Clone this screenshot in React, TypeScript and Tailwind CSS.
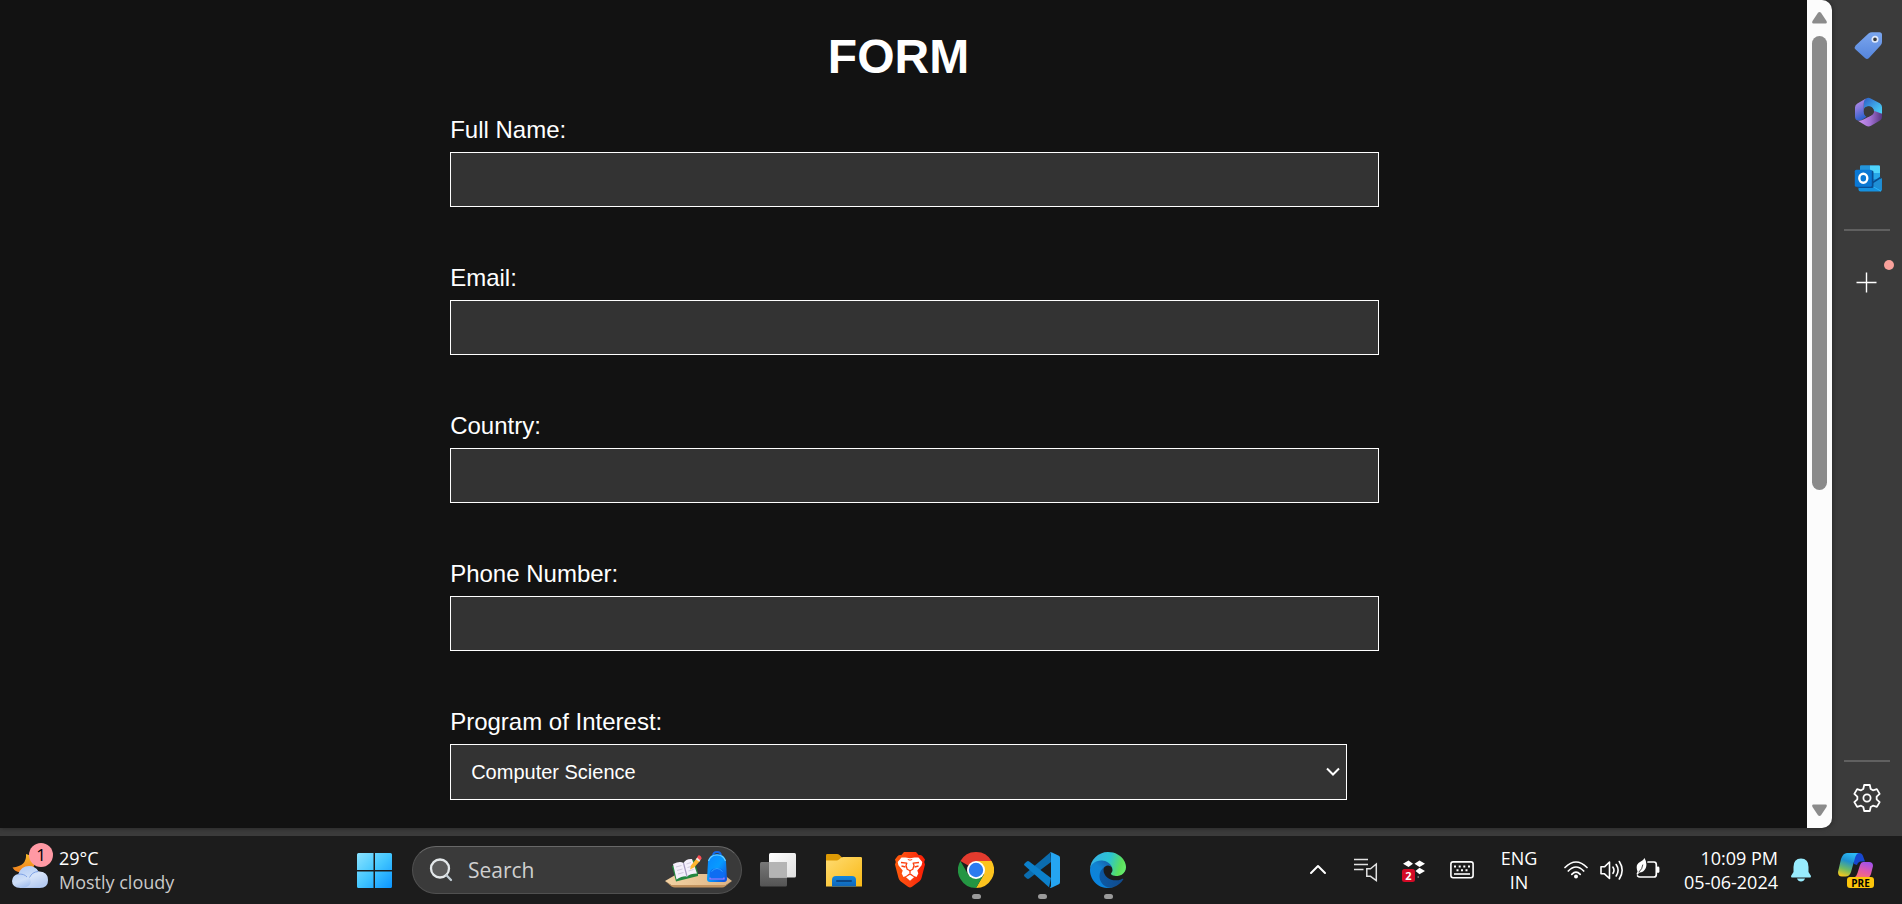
import type { ReactNode } from "react";

const textFields = [
  { id: "full-name", label: "Full Name:", type: "text" },
  { id: "email", label: "Email:", type: "email" },
  { id: "country", label: "Country:", type: "text" },
  { id: "phone", label: "Phone Number:", type: "tel" },
];

/* ---------- Sidebar icons ---------- */

function TagIcon() {
  return (
    <svg width="32" height="32" viewBox="0 0 32 32" className="ml-1" aria-hidden="true">
      <defs>
        <linearGradient id="tag" x1="0" y1="0" x2="0" y2="1">
          <stop offset="0" stopColor="#7ba6ee" />
          <stop offset="1" stopColor="#5585dc" />
        </linearGradient>
      </defs>
      <path d="M15.500 3.600 Q17 2.200 19 2.200 H26.500 Q29 2.200 29 4.700 V12 Q29 14 27.700 15.300 L16 28 Q14 29.800 12 28 L2.600 19.500 Q.8 17.500 2.600 15.500 Z" fill="url(#tag)" />
      <circle cx="22" cy="9.300" r="2.700" fill="#3b3b3b" stroke="#dfe9fb" strokeWidth="1.700" />
    </svg>
  );
}

function MicrosoftIcon() {
  return (
    <svg width="32" height="32" viewBox="0 0 32 32" className="ml-1" aria-hidden="true">
      <defs>
        <linearGradient id="m-left" x1="0" y1="0" x2=".3" y2="1">
          <stop offset="0" stopColor="#c492ec" />
          <stop offset=".5" stopColor="#8378dc" />
          <stop offset="1" stopColor="#2f62cf" />
        </linearGradient>
        <linearGradient id="m-right" x1="0" y1="0" x2="1" y2="1">
          <stop offset="0" stopColor="#2c5cc4" />
          <stop offset=".55" stopColor="#3fa8e8" />
          <stop offset="1" stopColor="#4fdcfa" />
        </linearGradient>
        <linearGradient id="m-base" x1="0" y1="0" x2="1" y2="0">
          <stop offset="0" stopColor="#cf95f4" />
          <stop offset=".5" stopColor="#a573d6" />
          <stop offset="1" stopColor="#573680" />
        </linearGradient>
      </defs>
      <path d="M11 4.500 L13 2.600 Q15 1.200 17.200 2.200 L26.800 7.200 Q29 8.600 29 11 V19 L20.800 15.500 Q20.500 11 16 10.600 Q12.500 10.600 11 14 Z" fill="url(#m-right)" />
      <path d="M13 2.600 L4.400 7.400 Q2 8.800 2 11.400 V20.500 Q2 24.600 5.500 24.600 Q8 24.600 9.500 23.500 L13.500 20.800 Q10.600 19 10.800 15.500 V7.600 Q10.800 4.400 13 2.600 Z" fill="url(#m-left)" />
      <path d="M29 17.500 V21 Q29 23.200 27 24.500 L18 29.800 Q15.500 31 13 29.800 L4.500 24.500 Q8 25.200 11 23.200 L18 19.400 Q21 18 20.800 14.800 L27 17 Q28.600 17.600 29 17.500 Z" fill="url(#m-base)" />
      <path d="M11 13 Q12 10.300 16 10.300 Q20.800 11 20.900 15.500 Q20.900 18 18 19.500 L15 21 Q11 19.500 10.900 15.500 Z" fill="#3b3b3b" />
    </svg>
  );
}

function OutlookIcon() {
  return (
    <svg width="32" height="32" viewBox="0 0 32 32" className="ml-1" aria-hidden="true">
      <rect x="7" y="3.500" width="20" height="18" rx="1.200" fill="#1a8ad8" />
      <path d="M17 3.500 H26 Q27 3.500 27 4.500 V11 H17 Z" fill="#50d4fb" />
      <path d="M8 3.500 H17 V11 H7 V4.500 Q7 3.500 8 3.500 Z" fill="#2496dc" />
      <path d="M17 11 H27 V17 H17 Z" fill="#28a8ea" />
      <path d="M5.500 20 L28.800 16.500 V27.500 Q28.800 29.500 27 29.500 H7.500 Q5.500 29.500 5.500 27.500 Z" fill="#1591e0" />
      <path d="M18 22.500 L28.800 16.200 V28.500 Z" fill="#1f8fd6" />
      <path d="M16 22.300 L28 29.200" stroke="#2cb4f4" strokeWidth="1" />
      <path d="M17 22.300 L27.500 15.500" stroke="#0b4c8c" strokeWidth="1.500" />
      <rect x="4" y="8.500" width="16.500" height="17.500" rx="1.500" fill="#0a4f94" />
      <rect x="1.800" y="7.800" width="17" height="17" rx="1.500" fill="#0a78d4" />
      <ellipse cx="10.300" cy="16.200" rx="4" ry="4.500" fill="none" stroke="#fff" strokeWidth="2.400" />
    </svg>
  );
}

function gearOutline() {
  const tooth = [
    [-3.7, -9],
    [-2.8, -13],
    [2.8, -13],
    [3.7, -9],
  ];
  const points: string[] = [];
  for (let i = 0; i < 6; i += 1) {
    const angle = (i * Math.PI) / 3;
    for (const [x, y] of tooth) {
      const px = 16 + x * Math.cos(angle) - y * Math.sin(angle);
      const py = 16 + x * Math.sin(angle) + y * Math.cos(angle);
      points.push(`${px.toFixed(2)},${py.toFixed(2)}`);
    }
  }
  return points.join(" ");
}

function GearIcon() {
  return (
    <svg width="32" height="32" viewBox="0 0 32 32" fill="none" stroke="#fff" strokeWidth="1.800" strokeLinejoin="round" aria-hidden="true">
      <polygon points={gearOutline()} />
      <circle cx="16" cy="16" r="3.600" />
    </svg>
  );
}

/* ---------- Taskbar icons ---------- */

function WeatherIcon() {
  return (
    <svg width="44" height="48" viewBox="0 0 44 48" aria-hidden="true">
      <defs>
        <linearGradient id="moon" x1="0" y1="0" x2="0" y2="1">
          <stop offset="0" stopColor="#f7b928" />
          <stop offset="1" stopColor="#f07c1c" />
        </linearGradient>
        <linearGradient id="cloud" x1="0" y1="0" x2=".6" y2="1">
          <stop offset="0" stopColor="#a9c6f5" />
          <stop offset=".6" stopColor="#cfdff8" />
          <stop offset="1" stopColor="#8fb0ea" />
        </linearGradient>
      </defs>
      <path d="M14 8 Q24 10 23 18 Q20 27 9 26.500 Q3 26 .500 21.500 Q15 20 14 8 Z" fill="url(#moon)" />
      <path d="M8.500 42 Q0 41.500 0 35 Q.500 29 6.500 28 Q9 20 17 20 Q23.500 20 26.500 25.500 Q36 25.500 36 34 Q36 42 27.500 42 Z" fill="url(#cloud)" />
      <path d="M17 31 Q20 25 27 25.600 Q36 26.500 36 34 Q36 41.500 28 41.800 H11 Q22 40 17 31 Z" fill="#dde8fa" opacity=".5" />
      <path d="M6 28.200 Q12 27.500 15 31 M17.500 31.500 Q20 26 26 25.500" fill="none" stroke="#7fa2e6" strokeWidth="1" />
    </svg>
  );
}

function WindowsIcon() {
  return (
    <svg width="35" height="35" viewBox="0 0 35 35" aria-hidden="true">
      <defs>
        <linearGradient id="win" gradientUnits="userSpaceOnUse" x1="0" y1="0" x2="35" y2="35">
          <stop offset="0" stopColor="#8be3ff" />
          <stop offset=".5" stopColor="#42c6ff" />
          <stop offset="1" stopColor="#0a94ff" />
        </linearGradient>
      </defs>
      <path fill="url(#win)" d="M1.500 0 H16.500 V17 H0 V1.500 Q0 0 1.500 0 Z M18 0 H33.500 Q35 0 35 1.500 V17 H18 Z M0 18.500 H16.500 V35 H1.500 Q0 35 0 33.500 Z M18 18.500 H35 V33.500 Q35 35 33.500 35 H18 Z" />
    </svg>
  );
}

function MagnifierIcon() {
  return (
    <svg width="24" height="24" viewBox="0 0 24 24" fill="none" stroke="#e4e8ea" strokeWidth="2.300" strokeLinecap="round" aria-hidden="true">
      <circle cx="11" cy="10.500" r="9" fill="#5a5a5a" />
      <path d="M17.500 17.300 L22 22" stroke="#c3ced6" />
    </svg>
  );
}

function StudyIllustration() {
  return (
    <svg width="68" height="38" viewBox="0 0 68 38" aria-hidden="true">
      <defs>
        <linearGradient id="pack" x1="0" y1="0" x2="1" y2="1">
          <stop offset="0" stopColor="#0a84ff" />
          <stop offset=".5" stopColor="#079bff" />
          <stop offset="1" stopColor="#1248d8" />
        </linearGradient>
        <linearGradient id="table" x1="0" y1="0" x2="1" y2="0">
          <stop offset="0" stopColor="#f3d2a3" />
          <stop offset="1" stopColor="#dcb485" />
        </linearGradient>
      </defs>
      <path d="M0 30 L12 23 H58 L67 30 L61 34 H6 Z" fill="url(#table)" />
      <path d="M0 30 L6 34 H61 L67 30 L60 35.500 Q59 36.500 57 36.500 H10 Q8 36.500 6.500 35.500 Z" fill="#c2935f" />
      <path d="M7 15 L11 30.500 L33 25 V22 L29 9 Z" fill="#24873f" />
      <path d="M8 13 Q15 9.500 18.500 12 Q21 7.500 27 8 L32 22.500 Q25 22.500 22 25.500 Q18 24.500 11.500 28.500 Z" fill="#f4effb" />
      <path d="M18.500 12 L22 25.500" stroke="#a79cc0" strokeWidth="1.200" />
      <path d="M11 16 L16.500 14.500 M12 19.500 L17.500 18 M13 23 L18.500 21.500 M21.500 13 L26 11.500 M22.500 16.500 L26 15.500 M23.500 20 L28.500 18.500" stroke="#cfc9dc" strokeWidth="1" />
      <path d="M25 18.500 L26 14.500 L31.500 7.500 L35 10 L29 16.500 Z" fill="#ffb52e" />
      <path d="M30.800 8.300 L32.500 6 L35.800 8.600 L34.200 10.800 Z" fill="#f2e7df" />
      <path d="M32 6.500 L33.500 4.300 Q36.500 4.500 36.500 7.500 L35.300 9.200 Z" fill="#fa4e55" />
      <path d="M48 5 Q48 1 52 1 Q56 1 56 5" fill="none" stroke="#1669e8" strokeWidth="1.800" />
      <path d="M43 11 Q44 3 52 3 Q60 3 61 11 L62 28 Q62 31 59 31 H45 Q42 31 42 28 Z" fill="url(#pack)" />
      <path d="M43.500 10 Q45.500 4 52 4 Q58.500 4 60.500 10" fill="none" stroke="#6fd2ff" strokeWidth="1.200" />
      <path d="M44.500 29 V23 Q45 17 52 17 Q59 17 59.500 23 V29 Z" fill="#0e6df2" />
      <path d="M46.500 20.500 Q52 14.500 57.500 20.500" fill="none" stroke="#30a5ff" strokeWidth="1" />
      <path d="M45 26.500 V28 H59 V26.500" fill="none" stroke="#b07cff" strokeWidth="1.200" />
    </svg>
  );
}

function TaskViewIcon() {
  return (
    <svg width="36" height="36" viewBox="0 0 36 36" aria-hidden="true">
      <defs>
        <linearGradient id="tv-front" x1="0" y1="0" x2="1" y2="1">
          <stop offset="0" stopColor="#fff" />
          <stop offset="1" stopColor="#dedede" />
        </linearGradient>
        <linearGradient id="tv-back" x1="0" y1="0" x2="0" y2="1">
          <stop offset="0" stopColor="#777" />
          <stop offset="1" stopColor="#545454" />
        </linearGradient>
      </defs>
      <rect x="0" y="10" width="27" height="24.500" rx="1.500" fill="url(#tv-back)" />
      <rect x="9" y="1" width="27" height="24.500" rx="1.500" fill="url(#tv-front)" />
      <rect x="9" y="10" width="18" height="15.500" fill="#b4b4b4" />
    </svg>
  );
}

function FolderIcon() {
  return (
    <svg width="36" height="36" viewBox="0 0 36 36" aria-hidden="true">
      <defs>
        <linearGradient id="folder" x1="0" y1="0" x2="1" y2="1">
          <stop offset="0" stopColor="#ffdc72" />
          <stop offset="1" stopColor="#f9b916" />
        </linearGradient>
        <linearGradient id="folder-tab" x1="0" y1="0" x2="0" y2="1">
          <stop offset="0" stopColor="#1487dc" />
          <stop offset="1" stopColor="#0f65b8" />
        </linearGradient>
      </defs>
      <path d="M0 3.200 Q0 2 1.200 2 H11 Q12.500 2 13.500 3 L17 6.500 V12 H0 Z" fill="#dd9a05" />
      <path d="M0 8.500 H10.500 Q12 8.500 13 7.500 L15 5.800 Q16 5 17.500 5 H34.800 Q36 5 36 6.200 V34.500 H0 Z" fill="url(#folder)" />
      <path d="M6 34.500 V28 Q6 24 10 24 H26 Q30 24 30 28 V34.500 Z" fill="url(#folder-tab)" />
      <path d="M11 29 H25" stroke="#0b4684" strokeWidth="2" strokeLinecap="round" />
    </svg>
  );
}

function BraveIcon() {
  return (
    <svg width="36" height="36" viewBox="0 0 36 36" aria-hidden="true">
      <defs>
        <linearGradient id="brave" x1="0" y1="0" x2="1" y2="0">
          <stop offset="0" stopColor="#ff5a0a" />
          <stop offset=".5" stopColor="#fb4010" />
          <stop offset="1" stopColor="#fb1c04" />
        </linearGradient>
      </defs>
      <path d="M12 0 H24 L26.800 3.200 Q29 2.800 30.500 4.200 L33 7.500 L32.200 10 L33 12.500 L29.500 26 Q29 28 27.500 29.200 L20 34.800 Q18 36.200 16 34.800 L8.500 29.200 Q7 28 6.500 26 L3 12.500 L3.800 10 L3 7.500 L5.500 4.200 Q7 2.800 9.200 3.200 Z" fill="url(#brave)" />
      <path d="M18 6.300 L22.500 5.600 L26.500 5.400 L30.300 10 L29.600 13.200 L25.300 18.500 L26.300 21.500 L24.500 25 L22 24 L18.800 21.400 H17.200 L14 24 L11.500 25 L9.700 21.500 L10.700 18.500 L6.400 13.200 L5.700 10 L9.500 5.400 L13.500 5.600 Z" fill="#fff" />
      <path d="M18 22.800 L22 25.300 L18 28.800 L14 25.300 Z" fill="#fff" />
      <path d="M9 10.500 L14.800 11.200 L14 13.500 L15.200 17.300 L18 18.800 L20.800 17.300 L22 13.500 L21.200 11.200 L27 10.500" fill="none" stroke="#fb4010" strokeWidth="1.300" strokeLinejoin="round" />
      <path d="M9.500 14 L13.500 15 M26.500 14 L22.500 15 M18 18.500 V21.500" stroke="#fb4010" strokeWidth="1.300" />
      <path d="M15.800 7.500 L18 8.200 L20.200 7.500" fill="none" stroke="#fb4010" strokeWidth="1" />
    </svg>
  );
}

function ChromeIcon() {
  return (
    <svg width="36" height="36" viewBox="0 0 36 36" aria-hidden="true">
      <path d="M18 18 L2.410 9 A18 18 0 0 1 33.590 9 Z" fill="#e33b2e" />
      <path d="M18 9 H33.590 A18 18 0 0 1 18 36 L25.800 22.500 Z" fill="#fcc31e" />
      <path d="M10.200 22.500 L2.410 9 A18 18 0 0 0 18 36 L25.800 22.500 Z" fill="#249643" />
      <circle cx="18" cy="18" r="9" fill="#fff" />
      <circle cx="18" cy="18" r="7.200" fill="#2b7bf0" />
    </svg>
  );
}

function VSCodeIcon() {
  return (
    <svg width="36" height="36" viewBox="0 0 36 36" aria-hidden="true">
      <path d="M26.500 .300 L27 10 L5.200 26.600 Q4 27.500 2.800 26.600 L.600 24.600 Q-.500 23.400 .600 22.300 Z" fill="#0b6cae" />
      <path d="M.600 11.400 Q-.500 12.500 .600 13.600 L25 35.200 L27 26 L5.200 9.400 Q4 8.600 2.800 9.400 Z" fill="#0c80cb" />
      <path d="M25.500 .600 Q26.600 -.200 28 .400 L34.800 3.700 Q36 4.400 36 5.800 V30.200 Q36 31.600 34.800 32.300 L28 35.600 Q26.600 36.200 25.500 35.200 Q27 35.600 27 33.600 V2.400 Q27 .200 25.500 .600 Z" fill="#25a5f1" />
    </svg>
  );
}

function EdgeIcon() {
  return (
    <svg width="36" height="36" viewBox="0 0 256 256" aria-hidden="true">
      <defs>
        <linearGradient id="edge-a" gradientUnits="userSpaceOnUse" x1="63" y1="178" x2="241" y2="178">
          <stop offset="0" stopColor="#0c59a4" />
          <stop offset="1" stopColor="#114a8b" />
        </linearGradient>
        <linearGradient id="edge-b" gradientUnits="userSpaceOnUse" x1="150" y1="100" x2="46" y2="215">
          <stop offset="0" stopColor="#1566b0" />
          <stop offset=".4" stopColor="#1183d2" />
          <stop offset="1" stopColor="#0a84de" />
        </linearGradient>
        <linearGradient id="edge-c" gradientUnits="userSpaceOnUse" x1="10" y1="40" x2="250" y2="120">
          <stop offset="0" stopColor="#35b1e8" />
          <stop offset=".5" stopColor="#2cc4d0" />
          <stop offset=".85" stopColor="#5be05c" />
          <stop offset="1" stopColor="#66eb6e" />
        </linearGradient>
      </defs>
      <path fill="url(#edge-a)" d="M231 190.500c-3.400 1.800-6.900 3.400-10.500 4.700-11.500 4.300-23.600 6.500-35.900 6.500-47.300 0-88.500-32.500-88.500-74.300.1-11.400 6.400-21.900 16.400-27.300-42.800 1.800-53.800 46.400-53.800 72.500 0 73.900 68.100 81.400 82.800 81.400 7.900 0 19.800-2.300 27-4.600l1.300-.4c27.600-9.500 51-28.100 66.600-52.800 1.200-1.900.6-4.300-1.200-5.500-1.300-.8-2.900-.9-4.200-.2z" />
      <path fill="url(#edge-b)" d="M105.700 241.400c-8.900-5.500-16.600-12.800-22.700-21.300-26.300-36-18.400-86.500 17.600-112.800 3.800-2.700 7.700-5.200 11.900-7.200 3.100-1.500 8.400-4.100 15.500-4 10.100.1 19.600 4.900 25.700 13 4 5.400 6.300 11.900 6.400 18.700 0-.2 24.500-79.600-80-79.600C36.200 48.200.1 89.800.1 126.400c-.2 19.400 4 38.500 12.100 56 27.600 58.800 94.800 87.600 156.400 67.100-21.100 6.600-44.100 3.700-62.900-8.100z" />
      <path fill="url(#edge-c)" d="M152.300 148.900c-.8 1-3.300 2.500-3.300 5.700 0 2.600 1.700 5.100 4.700 7.200 14.400 10 41.500 8.700 41.600 8.700 10.700 0 21.100-2.900 30.300-8.300 18.800-11 30.400-31.100 30.400-52.900.3-22.400-8-37.300-11.300-43.900C223.500 23.900 177.700 0 128 0 58 0 1 56.200 0 126.200c.5-36.500 36.800-66 80-66 3.500 0 23.500.3 42 10.100 16.300 8.600 24.900 18.900 30.800 29.200 6.200 10.700 7.300 24.100 7.300 29.500 0 5.300-2.700 13.300-7.800 19.900z" />
    </svg>
  );
}

function ChevronUpIcon() {
  return (
    <svg width="24" height="24" viewBox="0 0 24 24" fill="none" stroke="#fff" strokeWidth="2" strokeLinecap="round" strokeLinejoin="round" aria-hidden="true">
      <path d="M5 15 L12 8 L19 15" />
    </svg>
  );
}

function PlaylistSoundIcon() {
  return (
    <svg width="24" height="24" viewBox="0 0 24 24" fill="none" stroke="#e2e2e2" strokeWidth="1.500" aria-hidden="true">
      <path d="M0 1.500 H14 M0 6.500 H14 M0 11.500 H9.500" />
      <path d="M12.800 10.800 H16.500 L22.300 6 V22.500 L16.500 18.300 H12.800 Z" />
    </svg>
  );
}

function DropboxIcon() {
  return (
    <svg width="24" height="24" viewBox="0 0 24 24" aria-hidden="true">
      <path d="M1 5.800 L6.500 2.600 L11 5.800 L6.500 9 Z M12.500 5.800 L17.500 2.600 L23 5.800 L17.500 9 Z M13.500 13 L17.500 9.800 L23 13 L17.500 16.200 Z" fill="#fff" />
      <path d="M15.500 19 H17" fill="none" stroke="#bbb" strokeWidth="1" />
      <rect x="0" y="11" width="13" height="13" rx="2.500" fill="#d40a26" />
    </svg>
  );
}

function KeyboardIcon() {
  return (
    <svg width="24" height="24" viewBox="0 0 24 24" fill="none" stroke="#fff" strokeWidth="1.600" aria-hidden="true">
      <rect x=".9" y="3.900" width="22.200" height="15.800" rx="2.200" />
      <path d="M4 16 H20" />
      <path d="M4 8.500 h2 M8.700 8.500 h2 M13.300 8.500 h2 M18 8.500 h2 M6.500 12.300 h2 M11 12.300 h2 M15.500 12.300 h2" strokeWidth="2" />
    </svg>
  );
}

function WifiIcon() {
  return (
    <svg width="24" height="24" viewBox="0 0 24 24" fill="none" stroke="#fff" strokeWidth="1.700" strokeLinecap="round" aria-hidden="true">
      <path d="M1 9.500 Q12 -1.500 23 9.500 M4.300 13 Q12 5 19.700 13 M7.800 16.300 Q12 12 16.200 16.300" />
      <circle cx="12" cy="18.500" r="2" fill="#fff" stroke="none" />
    </svg>
  );
}

function VolumeIcon() {
  return (
    <svg width="24" height="24" viewBox="0 0 24 24" fill="none" stroke="#fff" strokeWidth="1.600" strokeLinecap="round" strokeLinejoin="round" aria-hidden="true">
      <path d="M1 8.800 H4.500 L9.500 4 V20.500 L4.500 15.800 H1 Z" />
      <path d="M13 9.200 Q15 12.200 13 15.300 M16.200 6.500 Q20 12.200 16.200 18 M19.300 3.500 Q25 12.200 19.300 21" />
    </svg>
  );
}

function BatteryIcon() {
  return (
    <svg width="24" height="24" viewBox="0 0 24 24" fill="none" stroke="#fff" strokeWidth="1.700" strokeLinecap="round" aria-hidden="true">
      <path d="M12 4 H18 Q20.300 4 20.300 6.500 V16.500 Q20.300 19 18 19 H4 Q2.500 19 1.600 18" />
      <path d="M22 10 V13.500" strokeWidth="2.800" />
      <path d="M8.500 0 Q11.500 5 9.800 10 Q7.500 14.500 3.500 14.500 L1.200 17 L.500 16 L1.500 13.500 Q-1 6.500 4 4 Q7.500 2.500 8.500 0 Z" fill="#fff" stroke="none" />
      <path d="M3 14 Q6.500 11 6.800 7" stroke="#1c1c1c" strokeWidth=".8" />
    </svg>
  );
}

function BellIcon() {
  return (
    <svg width="20" height="24" viewBox="0 0 20 24" aria-hidden="true">
      <path d="M10 .500 Q17.500 .500 17.500 9 V14 L20 18 Q20 19.500 19 19.500 H1 Q0 19.500 0 18 L2.500 14 V9 Q2.500 .500 10 .500 Z M6 20.500 H14 Q13 23.500 10 23.500 Q7 23.500 6 20.500 Z" fill="#98ecfe" />
    </svg>
  );
}

function CopilotIcon() {
  return (
    <svg width="36" height="36" viewBox="0 0 36 36" aria-hidden="true">
      <defs>
        <linearGradient id="cp-left" x1=".6" y1="0" x2=".3" y2="1">
          <stop offset="0" stopColor="#2cb8f4" />
          <stop offset=".35" stopColor="#1e90cf" />
          <stop offset=".7" stopColor="#6fba62" />
          <stop offset="1" stopColor="#f4c81e" />
        </linearGradient>
        <linearGradient id="cp-right" x1=".7" y1="0" x2=".3" y2="1">
          <stop offset="0" stopColor="#a252ec" />
          <stop offset=".5" stopColor="#e35aa8" />
          <stop offset="1" stopColor="#ff7a5c" />
        </linearGradient>
      </defs>
      <path d="M15 1 H21 Q24 1 25 4 L27 9.500 H23 Q20 9.500 19 13 L16 12 Z" fill="#1747cf" />
      <path d="M9 1 H20.500 Q18 2 17 6 L13 20 Q11.500 24.500 7.500 24.500 H4 Q0 24.500 0 20 L3 7 Q5 1 9 1 Z" fill="url(#cp-left)" />
      <path d="M25 10 H31 Q35 10 35 14 L33 22 Q31 27.500 27 27.500 H13 L17 25 Q18.500 24 19.500 21 L22 13 Q23 10 25 10 Z" fill="url(#cp-right)" />
    </svg>
  );
}

/* ---------- Building blocks ---------- */

function AppButton({ label, running, children }: { label: string; running?: boolean; children: ReactNode }) {
  return (
    <button type="button" aria-label={label} className="relative flex h-full w-[66px] items-center justify-center">
      {children}
      {running && <span className="absolute bottom-[5px] h-[5px] w-[9px] rounded-full bg-[#9a9a9a]" />}
    </button>
  );
}

function TrayButton({ label, children }: { label: string; children: ReactNode }) {
  return (
    <button type="button" aria-label={label} className="relative shrink-0">
      {children}
    </button>
  );
}

function RegistrationForm() {
  return (
    <main className="flex min-w-0 flex-1 justify-center overflow-hidden bg-[#121212] pr-[10px] font-['Liberation_Sans',Arial,sans-serif] text-white">
      <form className="w-[49.9%] pt-7">
        <h1 className="text-center text-[48px] font-bold leading-[57px]">FORM</h1>
        <div className="mt-8 flex flex-col gap-[58px]">
          {textFields.map((field) => (
            <div key={field.id} className="-mr-8 flex flex-col gap-[10px]">
              <label htmlFor={field.id} className="text-[24px] leading-[25px]">
                {field.label}
              </label>
              <input
                id={field.id}
                name={field.id}
                type={field.type}
                className="h-[55px] w-full border border-white bg-[#333] px-5 text-[20px] outline-none"
              />
            </div>
          ))}
          <div className="flex flex-col gap-[10px]">
            <label htmlFor="program" className="text-[24px] leading-[25px]">
              Program of Interest:
            </label>
            <div className="relative">
              <select
                id="program"
                name="program"
                className="h-[56px] w-full appearance-none border border-white bg-[#333] px-5 text-[20px] text-white outline-none"
              >
                <option>Computer Science</option>
                <option>Engineering</option>
                <option>Business</option>
              </select>
              <svg
                className="pointer-events-none absolute right-[6px] top-5"
                width="16"
                height="16"
                viewBox="0 0 16 16"
                fill="none"
                stroke="#fff"
                strokeWidth="2"
                aria-hidden="true"
              >
                <path d="M2 4.500 L8 10.500 L14 4.500" />
              </svg>
            </div>
          </div>
        </div>
      </form>
    </main>
  );
}

function ScrollRail() {
  return (
    <div className="flex w-[25px] shrink-0 flex-col items-center rounded-r-[10px] bg-[#fcfcfc] py-3">
      <svg width="15" height="12" viewBox="0 0 15 12" className="shrink-0" aria-hidden="true">
        <path d="M6 .800 Q7.500 -.600 9 .800 L14.500 9 Q15.500 11.500 13.500 11.500 H1.500 Q-.500 11.500 .500 9 Z" fill="#8b8b8b" />
      </svg>
      <div className="my-3 w-[15px] flex-1">
        <div className="h-3/5 rounded-full bg-[#8b8b8b]" />
      </div>
      <svg width="15" height="12" viewBox="0 0 15 12" className="shrink-0" aria-hidden="true">
        <path d="M6 11.200 Q7.500 12.600 9 11.200 L14.500 3 Q15.500 .500 13.500 .500 H1.500 Q-.500 .500 .500 3 Z" fill="#8b8b8b" />
      </svg>
    </div>
  );
}

function Sidebar() {
  return (
    <aside className="flex w-[70px] shrink-0 flex-col items-center pb-[22px] pt-[30px]">
      <div className="flex flex-col gap-[34px]">
        <button type="button" aria-label="Shopping">
          <TagIcon />
        </button>
        <button type="button" aria-label="Microsoft 365">
          <MicrosoftIcon />
        </button>
        <button type="button" aria-label="Outlook">
          <OutlookIcon />
        </button>
      </div>
      <div className="mt-[35px] h-[2px] w-[46px] bg-[#606060]" />
      <button type="button" aria-label="Customize" className="relative mt-9">
        <svg width="32" height="32" viewBox="0 0 32 32" stroke="#fff" strokeWidth="1.400" aria-hidden="true">
          <path d="M15.500 5.500 V25.500 M5.500 15.500 H25.500" />
        </svg>
        <span className="absolute -right-[11px] -top-[7px] size-[10px] rounded-full bg-[#f9a19b]" />
      </button>
      <div className="mt-auto h-[2px] w-[46px] bg-[#606060]" />
      <button type="button" aria-label="Settings" className="mt-5">
        <GearIcon />
      </button>
    </aside>
  );
}

function Taskbar() {
  return (
    <footer className="flex h-[68px] shrink-0 items-center bg-[#1c1c1c] pr-7 font-['Open_Sans','Noto_Sans',sans-serif] text-[18px] leading-6 text-white">
      <button type="button" className="flex w-[341px] shrink-0 items-center pl-3 text-left">
        <span className="relative">
          <WeatherIcon />
          <span className="absolute -top-[3px] left-[17px] flex size-6 items-center justify-center rounded-full bg-[#ff99a4] text-[17px] text-black">
            1
          </span>
        </span>
        <span className="ml-[3px]">
          <span className="block">29°C</span>
          <span className="block text-[#c9c9c9]">Mostly cloudy</span>
        </span>
      </button>

      <AppButton label="Start">
        <WindowsIcon />
      </AppButton>
      <label className="ml-[5px] mr-[3px] flex h-12 w-[330px] shrink-0 items-center rounded-full border border-[#505050] border-t-[#686868] bg-[#3a3a3a] pl-4 pr-2">
        <MagnifierIcon />
        <input
          type="search"
          aria-label="Search"
          placeholder="Search"
          className="ml-[15px] w-0 flex-1 bg-transparent text-[21px] outline-none placeholder:text-[#cfcfcf]"
        />
        <StudyIllustration />
      </label>
      <AppButton label="Task view">
        <TaskViewIcon />
      </AppButton>
      <AppButton label="File Explorer">
        <FolderIcon />
      </AppButton>
      <AppButton label="Brave">
        <BraveIcon />
      </AppButton>
      <AppButton label="Chrome" running>
        <ChromeIcon />
      </AppButton>
      <AppButton label="Visual Studio Code" running>
        <VSCodeIcon />
      </AppButton>
      <AppButton label="Edge" running>
        <EdgeIcon />
      </AppButton>

      <div className="ml-auto flex items-center gap-6">
        <TrayButton label="Show hidden icons">
          <ChevronUpIcon />
        </TrayButton>
        <TrayButton label="Audio playlist">
          <PlaylistSoundIcon />
        </TrayButton>
        <TrayButton label="Dropbox">
          <DropboxIcon />
          <span className="absolute bottom-0 left-0 w-[13px] text-center text-[11px] font-bold leading-[13px]">2</span>
        </TrayButton>
        <TrayButton label="Touch keyboard">
          <KeyboardIcon />
        </TrayButton>
        <button type="button" className="w-[42px] text-center">
          ENG
          <br />
          IN
        </button>
        <div className="flex gap-3">
          <TrayButton label="Network">
            <WifiIcon />
          </TrayButton>
          <TrayButton label="Volume">
            <VolumeIcon />
          </TrayButton>
          <TrayButton label="Battery">
            <BatteryIcon />
          </TrayButton>
        </div>
      </div>
      <button type="button" className="ml-[18px] w-[100px] whitespace-nowrap text-right">
        10:09 PM
        <br />
        05-06-2024
      </button>
      <button type="button" aria-label="Notifications" className="ml-[13px] shrink-0">
        <BellIcon />
      </button>
      <button type="button" aria-label="Copilot" className="relative ml-[27px] shrink-0">
        <CopilotIcon />
        <span className="absolute bottom-0 right-0 flex h-[11px] w-[27px] items-center justify-center rounded-[3px] bg-[#fdc60b] text-[10px] font-bold leading-none text-black">
          PRE
        </span>
      </button>
    </footer>
  );
}

export default function App() {
  return (
    <div className="flex h-screen flex-col overflow-hidden bg-[#3b3b3b]">
      <div className="flex min-h-0 flex-1">
        <div className="mb-2 flex min-w-0 flex-1 rounded-r-[10px] shadow-[0_0_5px_#222]">
          <RegistrationForm />
          <ScrollRail />
        </div>
        <Sidebar />
      </div>
      <Taskbar />
    </div>
  );
}
